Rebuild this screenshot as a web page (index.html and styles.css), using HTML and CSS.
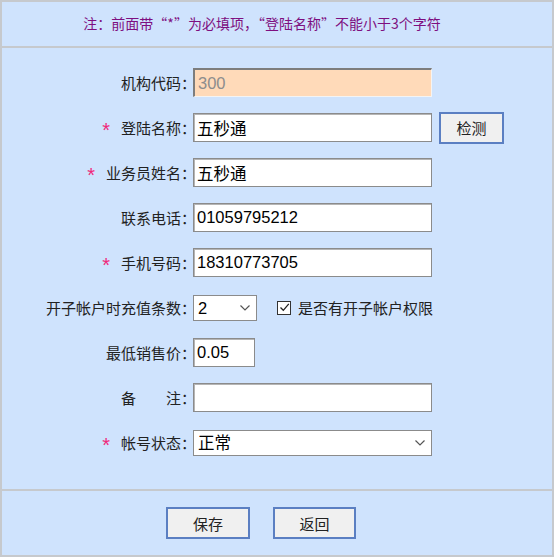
FILE: index.html
```html
<!DOCTYPE html>
<html lang="zh-CN">
<head>
<meta charset="utf-8">
<title>编辑帐户</title>
<link rel="stylesheet" href="styles.css">
</head>
<body>
<div class="panel">
  <div class="notice">注：前面带“*”为必填项，“登陆名称”不能小于3个字符</div>
  <div class="form">
    <div class="label">机构代码：</div>
    <div class="field"><input class="txt txt-wide readonly" value="300" readonly></div>

    <div class="label"><span class="star">*</span>登陆名称：</div>
    <div class="field"><input class="txt txt-wide" value="五秒通"><button class="btn btn-check">检测</button></div>

    <div class="label"><span class="star">*</span>业务员姓名：</div>
    <div class="field"><input class="txt txt-wide" value="五秒通"></div>

    <div class="label">联系电话：</div>
    <div class="field"><input class="txt txt-wide" value="01059795212"></div>

    <div class="label"><span class="star">*</span>手机号码：</div>
    <div class="field"><input class="txt txt-wide" value="18310773705"></div>

    <div class="label">开子帐户时充值条数：</div>
    <div class="field">
      <div class="sel sel-small">
        <select><option>2</option></select>
        <svg class="chev" width="10" height="6" viewBox="0 0 10 6"><path d="M0.5 0.5 L5 5 L9.5 0.5" fill="none" stroke="#555" stroke-width="1.2"/></svg>
      </div>
      <label class="check">
        <span class="box"><svg width="11" height="11" viewBox="0 0 11 11"><path d="M1.5 5.5 L4.3 8.3 L9.8 1.8" fill="none" stroke="#222" stroke-width="1.3"/></svg></span>
        是否有开子帐户权限
      </label>
    </div>

    <div class="label">最低销售价：</div>
    <div class="field"><input class="txt txt-price" value="0.05"></div>

    <div class="label">备<span class="sp"></span>注：</div>
    <div class="field"><input class="txt txt-wide" value=""></div>

    <div class="label"><span class="star">*</span>帐号状态：</div>
    <div class="field">
      <div class="sel sel-wide">
        <select><option>正常</option></select>
        <svg class="chev" width="10" height="6" viewBox="0 0 10 6"><path d="M0.5 0.5 L5 5 L9.5 0.5" fill="none" stroke="#555" stroke-width="1.2"/></svg>
      </div>
    </div>
  </div>
  <div class="footer">
    <button class="btn btn-save">保存</button>
    <button class="btn btn-back">返回</button>
  </div>
</div>
</body>
</html>
```

FILE: styles.css
```css
html, body {
  margin: 0;
  padding: 0;
  background: #cfe3fd;
}

body {
  font-family: "Noto Sans CJK SC", "Liberation Sans", sans-serif;
  color: #222;
}

.panel {
  width: 554px;
  height: 557px;
  box-sizing: border-box;
  border: 2px solid #c6c9cd;
  background: #cfe3fd;
  display: flex;
  flex-direction: column;
}

.notice {
  box-sizing: border-box;
  height: 46px;
  border-bottom: 2px solid #c6c9cd;
  display: flex;
  align-items: center;
  justify-content: center;
  color: #7e0f80;
  font-size: 14px;
  padding-bottom: 2px;
  padding-right: 30px;
}

.form {
  height: 443px;
  box-sizing: border-box;
  border-bottom: 2px solid #c6c9cd;
  padding-top: 12px;
  display: grid;
  grid-template-columns: 191px 1fr;
  grid-auto-rows: 45px;
}

.label {
  display: flex;
  align-items: center;
  justify-content: flex-end;
  margin-right: -3px;
  font-size: 15px;
  color: #222;
  white-space: nowrap;
}

.star {
  color: #f0287a;
  font-family: "Liberation Sans", sans-serif;
  font-size: 20px;
  margin-right: 11px;
  position: relative;
  top: 3px;
}

.sp {
  display: inline-block;
  width: 30px;
}

.field {
  display: flex;
  align-items: center;
  padding-left: 0;
}

.txt {
  box-sizing: border-box;
  height: 29px;
  border: 1px solid #8b8b8b;
  box-shadow: inset 1px 1px 0 #b5b5b5;
  background: #fff;
  font-family: "Liberation Sans", "Noto Sans CJK SC", sans-serif;
  font-size: 16.5px;
  color: #000;
  padding: 0 3px;
  margin: 0;
  outline: none;
}

.txt-wide {
  width: 239px;
}

.txt-price {
  width: 62px;
}

.readonly {
  background: #ffdab9;
  color: #8d8d8d;
  border-top: 2px solid #7d7d7d;
  border-left: 2px solid #7d7d7d;
  border-right: 1px solid #f4f4f4;
  border-bottom: 1px solid #f4f4f4;
  box-shadow: none;
}

.btn {
  box-sizing: border-box;
  background: #f0f0f0;
  border: 2px solid #5b7fc2;
  font-family: "Noto Sans CJK SC", sans-serif;
  font-size: 15px;
  color: #222;
  padding: 0;
  margin: 0;
}

.btn-check {
  width: 65px;
  height: 32px;
  margin-left: 7px;
}

.sel {
  position: relative;
  height: 26px;
}

.sel select {
  appearance: none;
  -webkit-appearance: none;
  box-sizing: border-box;
  height: 26px;
  width: 100%;
  border: 1px solid #8b8b8b;
  background: #fff;
  font-family: "Liberation Sans", "Noto Sans CJK SC", sans-serif;
  font-size: 16.5px;
  color: #000;
  padding: 0 4px;
  margin: 0;
  outline: none;
}

.sel-small {
  width: 64px;
}

.sel-wide {
  width: 239px;
}

.chev {
  position: absolute;
  right: 7px;
  top: 10px;
  pointer-events: none;
}

.check {
  display: flex;
  align-items: center;
  margin-left: 20px;
  font-size: 15px;
  color: #222;
}

.box {
  box-sizing: border-box;
  width: 14px;
  height: 14px;
  border: 1px solid #333;
  background: #fff;
  display: flex;
  align-items: center;
  justify-content: center;
  margin-right: 7px;
}

.box svg {
  display: block;
}

.footer {
  flex: 1;
  display: flex;
  align-items: flex-start;
  padding-top: 16px;
  padding-left: 164px;
  gap: 23px;
}

.btn-save {
  width: 84px;
  height: 32px;
}

.btn-back {
  width: 83px;
  height: 32px;
}
```
